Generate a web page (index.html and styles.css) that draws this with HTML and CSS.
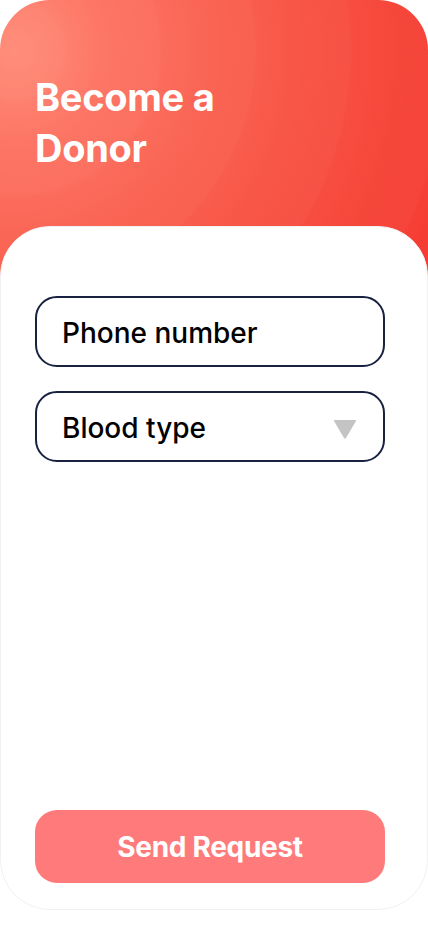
FILE: index.html
```html
<!DOCTYPE html>
<html lang="en">
<head>
<meta charset="utf-8">
<title>Become a Donor</title>
<link rel="stylesheet" href="styles.css">
</head>
<body>
<div class="screen">
  <header class="header">
    <h1 class="title">Become a<br>Donor</h1>
  </header>
  <main class="card">
    <div class="fields">
      <div class="field"><span class="label">Phone number</span></div>
      <div class="field field-select">
        <span class="label">Blood type</span>
        <svg class="caret" width="24" height="20" viewBox="0 0 24 20"><path d="M1.5 1 H22.5 Q23.5 1 23 2 L13 19 Q12 20.5 11 19 L1 2 Q0.5 1 1.5 1 Z" fill="#c4c4c4"/></svg>
      </div>
    </div>
    <button class="send">Send Request</button>
  </main>
</div>
</body>
</html>
```
FILE: styles.css
```css
html, body {
  margin: 0;
  padding: 0;
  background: #ffffff;
}
.screen {
  width: 428px;
  height: 926px;
  overflow: hidden;
  font-family: Inter, "Noto Sans", sans-serif;
}
.header {
  height: 280px;
  box-sizing: border-box;
  padding: 72px 0 0 35px;
  border-radius: 50px 50px 0 0;
  background:
    repeating-radial-gradient(circle at 15px 50px, rgba(255,255,255,0) 0, rgba(255,255,255,0.025) 50px, rgba(255,255,255,0) 52px, rgba(255,255,255,0) 95px),
    radial-gradient(circle at 15px 50px, #ff8e7a 0, #fd7666 90px, #f9604f 220px, #f6473b 380px, #f5332d 520px);
}
.title {
  margin: 0;
  color: #ffffff;
  font-weight: 700;
  font-size: 38px;
  line-height: 51px;
  letter-spacing: -0.3px;
}
.card {
  margin-top: -54px;
  height: 684px;
  box-sizing: border-box;
  background: #ffffff;
  border: 1px solid #f1f1f1;
  border-radius: 50px;
  padding: 69px 42px 26px 34px;
  display: flex;
  flex-direction: column;
}
.fields {
  display: flex;
  flex-direction: column;
  gap: 24px;
}
.field {
  height: 71px;
  box-sizing: border-box;
  border: 2px solid #18213f;
  border-radius: 22px;
  padding: 0 26px 0 25px;
  display: flex;
  align-items: center;
  justify-content: space-between;
}
.label {
  font-size: 28px;
  font-weight: 500;
  color: #000000;
  letter-spacing: 0;
  margin-top: 2px;
}
.caret {
  display: block;
  margin-top: 4px;
}
.send {
  margin-top: auto;
  height: 73px;
  width: 350px;
  border: none;
  border-radius: 22px;
  background: #ff7b7b;
  color: #ffffff;
  font-family: Inter, "Noto Sans", sans-serif;
  font-size: 28px;
  font-weight: 700;
  letter-spacing: -0.3px;
  padding: 0;
}
```
